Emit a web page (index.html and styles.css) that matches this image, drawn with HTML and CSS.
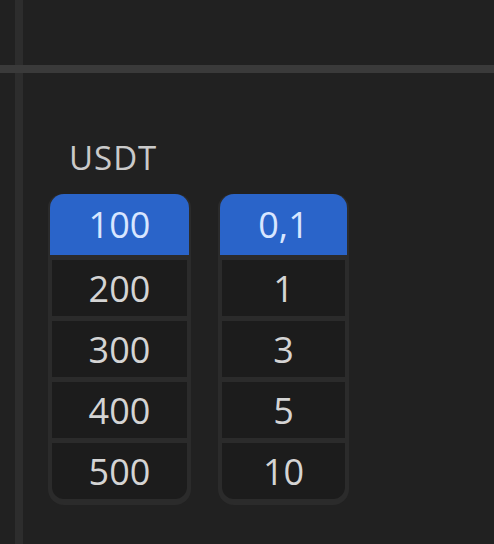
FILE: index.html
```html
<!DOCTYPE html>
<html>
<head>
<meta charset="utf-8">
<link rel="stylesheet" href="styles.css">
</head>
<body>
<div class="frame">
  <div class="vline"></div>
  <div class="hline"></div>
  <div class="content">
    <div class="label">USDT</div>
    <div class="pickers">
      <div class="picker picker-wide">
        <div class="cell selected">100</div>
        <div class="cell">200</div>
        <div class="cell">300</div>
        <div class="cell">400</div>
        <div class="cell">500</div>
      </div>
      <div class="picker picker-narrow">
        <div class="cell selected">0,1</div>
        <div class="cell">1</div>
        <div class="cell">3</div>
        <div class="cell">5</div>
        <div class="cell">10</div>
      </div>
    </div>
  </div>
</div>
</body>
</html>
```

FILE: styles.css
```css
html, body {
  margin: 0;
  padding: 0;
  background: #212121;
}
body {
  width: 494px;
  height: 544px;
  overflow: hidden;
  font-family: "Open Sans", "DejaVu Sans", sans-serif;
}
.frame {
  display: grid;
  grid-template-columns: 15px 8px 1fr;
  grid-template-rows: 65px 8px 1fr;
  height: 544px;
}
.vline {
  grid-column: 2;
  grid-row: 1 / 4;
  background: #2d2d2d;
}
.hline {
  grid-column: 1 / 4;
  grid-row: 2;
  background: #3a3a3a;
}
.content {
  grid-column: 3;
  grid-row: 3;
  padding: 64px 0 0 25px;
}
.label {
  color: #cacaca;
  font-size: 33px;
  line-height: 42px;
  margin-left: 21px;
  letter-spacing: 1px;
  font-weight: 500;
}
.pickers {
  display: flex;
  gap: 27px;
  margin-top: 15px;
}
.picker {
  display: flex;
  flex-direction: column;
  gap: 5px;
  padding: 0 4px 6px;
  background: #2b2b2b;
  border-radius: 14px 14px 16px 16px;
}
.picker-wide { width: 135px; }
.picker-narrow { width: 123px; }
.cell {
  height: 56px;
  display: flex;
  align-items: center;
  justify-content: center;
  background: #1c1c1c;
  color: #d4d4d4;
  font-size: 36px;
  font-weight: 500;
}
.cell:last-child {
  border-radius: 0 0 12px 12px;
}
.cell.selected {
  height: 61px;
  margin: 0 -2px;
  background: #2a64c9;
  color: #d8e6ff;
  border-radius: 14px 14px 0 0;
}
```
